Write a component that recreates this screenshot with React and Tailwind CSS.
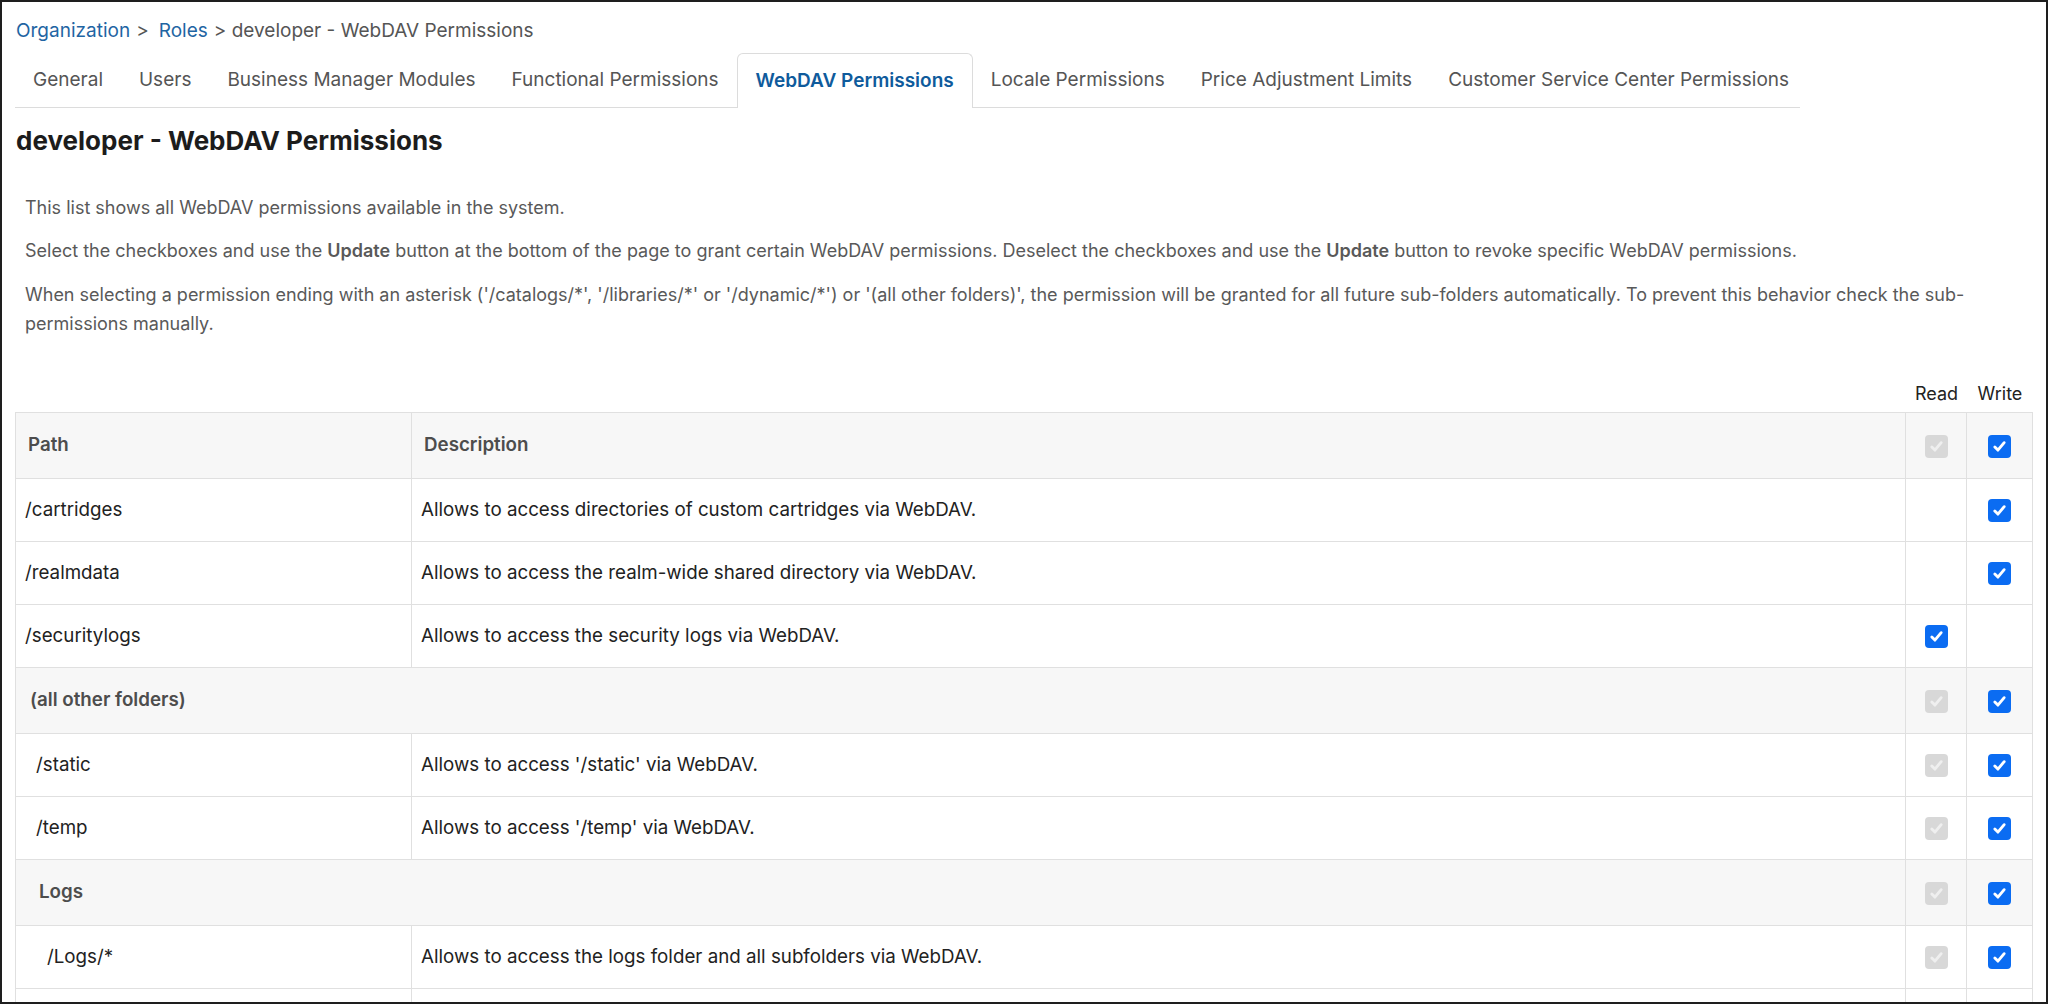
const TABS = [
  "General",
  "Users",
  "Business Manager Modules",
  "Functional Permissions",
  "WebDAV Permissions",
  "Locale Permissions",
  "Price Adjustment Limits",
  "Customer Service Center Permissions"
];

const ROWS = [
  { path: "/cartridges", desc: "Allows to access directories of custom cartridges via WebDAV.", read: null, write: "on", indent: "pl-[9px]" },
  { path: "/realmdata", desc: "Allows to access the realm-wide shared directory via WebDAV.", read: null, write: "on", indent: "pl-[9px]" },
  { path: "/securitylogs", desc: "Allows to access the security logs via WebDAV.", read: "on", write: null, indent: "pl-[9px]" },
  { group: "(all other folders)", read: "off", write: "on", indent: "pl-[14px]" },
  { path: "/static", desc: "Allows to access '/static' via WebDAV.", read: "off", write: "on", indent: "pl-[20px]" },
  { path: "/temp", desc: "Allows to access '/temp' via WebDAV.", read: "off", write: "on", indent: "pl-[20px]" },
  { group: "Logs", read: "off", write: "on", indent: "pl-[23px]" },
  { path: "/Logs/*", desc: "Allows to access the logs folder and all subfolders via WebDAV.", read: "off", write: "on", indent: "pl-[31px]" },
  { path: "", desc: "", read: null, write: null, indent: "pl-[31px]" }
];

function Check({ state }) {
  if (!state) return null;
  const on = state === "on";
  return (
    <span
      className={`inline-flex h-[23px] w-[23px] items-center justify-center rounded-[4px] align-middle ${
        on ? "bg-[#0b6cf2]" : "bg-[#d8d8d8]"
      }`}
    >
      <svg viewBox="0 0 16 16" className="h-[17px] w-[17px]" fill="none">
        <path
          d="M3.6 8.4l2.9 3 5.9-7"
          stroke={on ? "#ffffff" : "#efefef"}
          strokeWidth="2.7"
          strokeLinecap="round"
          strokeLinejoin="round"
        />
      </svg>
    </span>
  );
}

export default function App() {
  return (
    <div className="box-border h-[1004px] w-full overflow-hidden border-2 border-[#1e1e1e] bg-white px-[13px] font-['Inter',sans-serif] text-[#222]">
      {/* breadcrumb */}
      <div className="mt-[17px] flex h-[24px] items-center pl-[1px] text-[19px] text-[#555]">
        <a className="text-[#1f65a3]">Organization</a>
        <span className="ml-[6px] mr-[10px]">&gt;</span>
        <a className="text-[#1f65a3]">Roles</a>
        <span className="ml-[6px]">&gt; developer - WebDAV Permissions</span>
      </div>

      {/* tabs */}
      <div className="mt-[10px] flex h-[55px] w-[1785px] items-end border-b border-[#dcdcdc] text-[19px]">
        {TABS.map((t) => {
          const active = t === "WebDAV Permissions";
          return (
            <div
              key={t}
              className={`-mb-px flex h-[55px] shrink-0 items-center whitespace-nowrap px-[18px] ${
                active
                  ? "rounded-t-[6px] border border-b-0 border-[#dcdcdc] bg-white font-semibold text-[#0f5b9c]"
                  : "text-[#555]"
              }`}
            >
              {t}
            </div>
          );
        })}
      </div>

      <h1 className="mt-[17px] pl-[1px] text-[26px] font-bold leading-[32px] text-[#1c1c1c]">
        developer - WebDAV Permissions
      </h1>

      <div className="mt-[36px] w-[1990px] pl-[10px] text-[18px] leading-[29px] text-[#595959]">
        <p>This list shows all WebDAV permissions available in the system.</p>
        <p className="mt-[14px]">
          Select the checkboxes and use the <b className="font-semibold">Update</b> button at the bottom of the page to
          grant certain WebDAV permissions. Deselect the checkboxes and use the <b className="font-semibold">Update</b>{" "}
          button to revoke specific WebDAV permissions.
        </p>
        <p className="mt-[15px]">
          When selecting a permission ending with an asterisk ('/catalogs/*', '/libraries/*' or '/dynamic/*') or '(all
          other folders)', the permission will be granted for all future sub-folders automatically. To prevent this
          behavior check the sub-permissions manually.
        </p>
      </div>

      {/* read / write labels */}
      <div className="mt-[42px] flex h-[24px] justify-end text-[18px] text-[#222]">
        <div className="w-[61px] text-center">Read</div>
        <div className="w-[66px] text-center">Write</div>
      </div>

      <table className="mt-[8px] w-full border-collapse text-[18.75px]">
        <colgroup>
          <col className="w-[396px]" />
          <col />
          <col className="w-[61px]" />
          <col className="w-[66px]" />
        </colgroup>
        <thead>
          <tr className="h-[66px] bg-[#f7f7f7]">
            <th className="border border-[#e0e0e0] pl-[12px] text-left font-semibold text-[#4d4d4d]">Path</th>
            <th className="border border-[#e0e0e0] pl-[12px] text-left font-semibold text-[#4d4d4d]">Description</th>
            <th className="border border-[#e0e0e0] text-center">
              <Check state="off" />
            </th>
            <th className="border border-[#e0e0e0] text-center">
              <Check state="on" />
            </th>
          </tr>
        </thead>
        <tbody>
          {ROWS.map((r, i) =>
            r.group ? (
              <tr key={i} className="h-[66px] bg-[#f7f7f7]">
                <td colSpan={2} className={`border border-[#e0e0e0] font-semibold text-[#4d4d4d] ${r.indent}`}>
                  {r.group}
                </td>
                <td className="border border-[#e0e0e0] text-center">
                  <Check state={r.read} />
                </td>
                <td className="border border-[#e0e0e0] text-center">
                  <Check state={r.write} />
                </td>
              </tr>
            ) : (
              <tr key={i} className="h-[63px]">
                <td className={`border border-[#e0e0e0] ${r.indent}`}>{r.path}</td>
                <td className="border border-[#e0e0e0] pl-[9px]">{r.desc}</td>
                <td className="border border-[#e0e0e0] text-center">
                  <Check state={r.read} />
                </td>
                <td className="border border-[#e0e0e0] text-center">
                  <Check state={r.write} />
                </td>
              </tr>
            )
          )}
        </tbody>
      </table>
    </div>
  );
}
